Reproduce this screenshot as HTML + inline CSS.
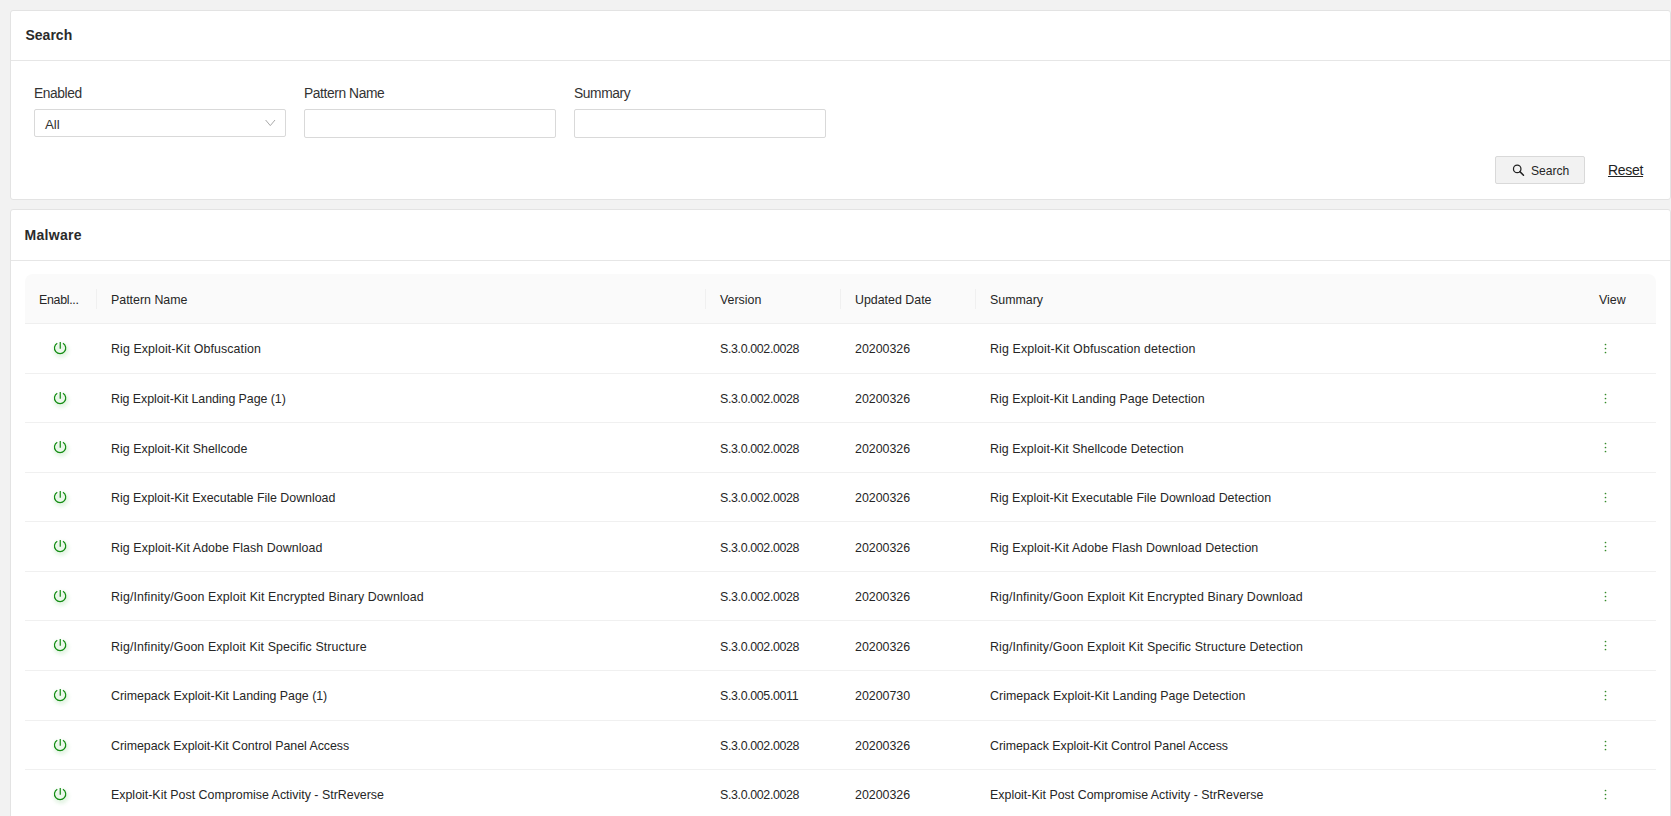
<!DOCTYPE html>
<html>
<head>
<meta charset="utf-8">
<style>
html,body{margin:0;padding:0;}
body{width:1671px;height:816px;overflow:hidden;background:#f2f2f2;font-family:"Liberation Sans",sans-serif;color:#333;position:relative;}
.abs{position:absolute;}
.card{position:absolute;left:10px;width:1659px;background:#fff;border:1px solid #e3e3e3;border-radius:3px;}
#c1{top:10px;height:188px;}
#c2{top:209px;height:620px;}
.ctitle{position:absolute;font-weight:bold;font-size:14px;letter-spacing:0;line-height:16px;color:#2a2a2a;white-space:nowrap;}
.hdiv{position:absolute;left:0;right:0;height:1px;background:#e6e6e6;}
.lbl{position:absolute;font-size:13.8px;line-height:15px;letter-spacing:-0.4px;color:#333;white-space:nowrap;}
.inp{position:absolute;background:#fff;border:1px solid #d9d9d9;border-radius:2px;box-sizing:border-box;}
.btn{position:absolute;background:#f2f2f2;border:1px solid #d9d9d9;border-radius:2px;box-sizing:border-box;}
.t{position:absolute;white-space:nowrap;font-size:12.4px;line-height:14px;color:#262626;}
.v{letter-spacing:-0.35px;}
.th{position:absolute;left:25px;width:1631px;top:274px;height:49px;background:#fafafa;border-radius:8px 8px 0 0;border-bottom:1px solid #efefef;}
.sep{position:absolute;top:289px;width:1px;height:20px;background:#f0f0f0;}
.row{position:absolute;left:25px;width:1631px;border-bottom:1px solid #f0f0f0;box-sizing:border-box;}
</style>
</head>
<body>
<!-- Search card -->
<div class="card" id="c1"></div>
<div class="ctitle" style="left:25.5px;top:27px;">Search</div>
<div class="hdiv" style="left:11px;width:1659px;top:60px;"></div>

<div class="lbl" style="left:34px;top:86px;">Enabled</div>
<div class="lbl" style="left:304px;top:86px;">Pattern Name</div>
<div class="lbl" style="left:574px;top:86px;">Summary</div>

<div class="inp" style="left:34px;top:109px;width:252px;height:28px;"></div>
<div class="lbl" style="left:45px;top:117px;font-size:13.3px;letter-spacing:0;">All</div>
<svg class="abs" style="left:264px;top:118px;" width="12" height="9" viewBox="0 0 12 9"><path d="M1.6 2 L6.3 7.6 L11 2" fill="none" stroke="#a9a9a9" stroke-width="1"/></svg>
<div class="inp" style="left:304px;top:109px;width:252px;height:29px;"></div>
<div class="inp" style="left:574px;top:109px;width:252px;height:29px;"></div>

<div class="btn" style="left:1495px;top:156px;width:90px;height:28px;"></div>
<svg class="abs" style="left:1511px;top:163px;" width="14" height="14" viewBox="0 0 14 14"><circle cx="6.2" cy="5.9" r="3.75" fill="none" stroke="#222" stroke-width="1.25"/><path d="M8.9 8.6 L12.5 12.2" stroke="#222" stroke-width="1.5" stroke-linecap="round"/></svg>
<div class="t" style="left:1531px;top:164px;font-size:12.1px;">Search</div>
<div class="lbl" style="left:1608px;top:163px;font-size:14px;letter-spacing:-0.3px;text-decoration:underline;text-underline-offset:1px;color:#222;">Reset</div>

<!-- Malware card -->
<div class="card" id="c2"></div>
<div class="ctitle" style="left:24.5px;top:227px;letter-spacing:0.3px;">Malware</div>
<div class="hdiv" style="left:11px;width:1659px;top:260px;"></div>

<div class="th"></div>
<div class="sep" style="left:96px;"></div>
<div class="sep" style="left:705px;"></div>
<div class="sep" style="left:840px;"></div>
<div class="sep" style="left:975px;"></div>
<div class="t" style="left:39px;top:293px;letter-spacing:-0.3px;">Enabl...</div>
<div class="t" style="left:111px;top:293px;">Pattern Name</div>
<div class="t" style="left:720px;top:293px;">Version</div>
<div class="t" style="left:855px;top:293px;">Updated Date</div>
<div class="t" style="left:990px;top:293px;">Summary</div>
<div class="t" style="left:1599px;top:293px;">View</div>

<div id="rows">
<div class="row" style="top:324px;height:50px;"></div>
<div class="t" style="left:111px;top:342.45px;letter-spacing:0.096px">Rig Exploit-Kit Obfuscation</div>
<div class="t v" style="left:720px;top:342.45px;">S.3.0.002.0028</div>
<div class="t d" style="left:855px;top:342.45px;">20200326</div>
<div class="t" style="left:990px;top:342.45px;letter-spacing:0.117px">Rig Exploit-Kit Obfuscation detection</div>
<svg class="abs" style="left:50px;top:338px;overflow:visible;filter:drop-shadow(1px 2px 2px rgba(40,170,40,0.45))" width="20" height="20" viewBox="0 0 20 20"><path d="M7.27 5.15 A5.65 5.65 0 1 0 12.93 5.15" fill="none" stroke="#128c12" stroke-width="1.2"/><path d="M10.25 4.1 V10.7" stroke="#128c12" stroke-width="1.2"/></svg>
<svg class="abs" style="left:1603px;top:342px;" width="5" height="13" viewBox="0 0 5 13"><circle cx="2.5" cy="2.5" r="0.85" fill="#358a2a"/><circle cx="2.5" cy="6.5" r="0.85" fill="#358a2a"/><circle cx="2.5" cy="10.5" r="0.85" fill="#358a2a"/></svg>
<div class="row" style="top:374px;height:49px;"></div>
<div class="t" style="left:111px;top:392.0px;letter-spacing:-0.049px">Rig Exploit-Kit Landing Page (1)</div>
<div class="t v" style="left:720px;top:392.0px;">S.3.0.002.0028</div>
<div class="t d" style="left:855px;top:392.0px;">20200326</div>
<div class="t" style="left:990px;top:392.0px;letter-spacing:0.027px">Rig Exploit-Kit Landing Page Detection</div>
<svg class="abs" style="left:50px;top:388px;overflow:visible;filter:drop-shadow(1px 2px 2px rgba(40,170,40,0.45))" width="20" height="20" viewBox="0 0 20 20"><path d="M7.27 5.15 A5.65 5.65 0 1 0 12.93 5.15" fill="none" stroke="#128c12" stroke-width="1.2"/><path d="M10.25 4.1 V10.7" stroke="#128c12" stroke-width="1.2"/></svg>
<svg class="abs" style="left:1603px;top:392px;" width="5" height="13" viewBox="0 0 5 13"><circle cx="2.5" cy="2.5" r="0.85" fill="#358a2a"/><circle cx="2.5" cy="6.5" r="0.85" fill="#358a2a"/><circle cx="2.5" cy="10.5" r="0.85" fill="#358a2a"/></svg>
<div class="row" style="top:423px;height:50px;"></div>
<div class="t" style="left:111px;top:441.55px;letter-spacing:0.029px">Rig Exploit-Kit Shellcode</div>
<div class="t v" style="left:720px;top:441.55px;">S.3.0.002.0028</div>
<div class="t d" style="left:855px;top:441.55px;">20200326</div>
<div class="t" style="left:990px;top:441.55px;letter-spacing:0.061px">Rig Exploit-Kit Shellcode Detection</div>
<svg class="abs" style="left:50px;top:437px;overflow:visible;filter:drop-shadow(1px 2px 2px rgba(40,170,40,0.45))" width="20" height="20" viewBox="0 0 20 20"><path d="M7.27 5.15 A5.65 5.65 0 1 0 12.93 5.15" fill="none" stroke="#128c12" stroke-width="1.2"/><path d="M10.25 4.1 V10.7" stroke="#128c12" stroke-width="1.2"/></svg>
<svg class="abs" style="left:1603px;top:441px;" width="5" height="13" viewBox="0 0 5 13"><circle cx="2.5" cy="2.5" r="0.85" fill="#358a2a"/><circle cx="2.5" cy="6.5" r="0.85" fill="#358a2a"/><circle cx="2.5" cy="10.5" r="0.85" fill="#358a2a"/></svg>
<div class="row" style="top:473px;height:49px;"></div>
<div class="t" style="left:111px;top:491.1px;letter-spacing:-0.003px">Rig Exploit-Kit Executable File Download</div>
<div class="t v" style="left:720px;top:491.1px;">S.3.0.002.0028</div>
<div class="t d" style="left:855px;top:491.1px;">20200326</div>
<div class="t" style="left:990px;top:491.1px;letter-spacing:0.017px">Rig Exploit-Kit Executable File Download Detection</div>
<svg class="abs" style="left:50px;top:487px;overflow:visible;filter:drop-shadow(1px 2px 2px rgba(40,170,40,0.45))" width="20" height="20" viewBox="0 0 20 20"><path d="M7.27 5.15 A5.65 5.65 0 1 0 12.93 5.15" fill="none" stroke="#128c12" stroke-width="1.2"/><path d="M10.25 4.1 V10.7" stroke="#128c12" stroke-width="1.2"/></svg>
<svg class="abs" style="left:1603px;top:491px;" width="5" height="13" viewBox="0 0 5 13"><circle cx="2.5" cy="2.5" r="0.85" fill="#358a2a"/><circle cx="2.5" cy="6.5" r="0.85" fill="#358a2a"/><circle cx="2.5" cy="10.5" r="0.85" fill="#358a2a"/></svg>
<div class="row" style="top:522px;height:50px;"></div>
<div class="t" style="left:111px;top:540.65px;letter-spacing:0.077px">Rig Exploit-Kit Adobe Flash Download</div>
<div class="t v" style="left:720px;top:540.65px;">S.3.0.002.0028</div>
<div class="t d" style="left:855px;top:540.65px;">20200326</div>
<div class="t" style="left:990px;top:540.65px;letter-spacing:0.084px">Rig Exploit-Kit Adobe Flash Download Detection</div>
<svg class="abs" style="left:50px;top:536px;overflow:visible;filter:drop-shadow(1px 2px 2px rgba(40,170,40,0.45))" width="20" height="20" viewBox="0 0 20 20"><path d="M7.27 5.15 A5.65 5.65 0 1 0 12.93 5.15" fill="none" stroke="#128c12" stroke-width="1.2"/><path d="M10.25 4.1 V10.7" stroke="#128c12" stroke-width="1.2"/></svg>
<svg class="abs" style="left:1603px;top:540px;" width="5" height="13" viewBox="0 0 5 13"><circle cx="2.5" cy="2.5" r="0.85" fill="#358a2a"/><circle cx="2.5" cy="6.5" r="0.85" fill="#358a2a"/><circle cx="2.5" cy="10.5" r="0.85" fill="#358a2a"/></svg>
<div class="row" style="top:572px;height:49px;"></div>
<div class="t" style="left:111px;top:590.2px;letter-spacing:0.115px">Rig/Infinity/Goon Exploit Kit Encrypted Binary Download</div>
<div class="t v" style="left:720px;top:590.2px;">S.3.0.002.0028</div>
<div class="t d" style="left:855px;top:590.2px;">20200326</div>
<div class="t" style="left:990px;top:590.2px;letter-spacing:0.116px">Rig/Infinity/Goon Exploit Kit Encrypted Binary Download</div>
<svg class="abs" style="left:50px;top:586px;overflow:visible;filter:drop-shadow(1px 2px 2px rgba(40,170,40,0.45))" width="20" height="20" viewBox="0 0 20 20"><path d="M7.27 5.15 A5.65 5.65 0 1 0 12.93 5.15" fill="none" stroke="#128c12" stroke-width="1.2"/><path d="M10.25 4.1 V10.7" stroke="#128c12" stroke-width="1.2"/></svg>
<svg class="abs" style="left:1603px;top:590px;" width="5" height="13" viewBox="0 0 5 13"><circle cx="2.5" cy="2.5" r="0.85" fill="#358a2a"/><circle cx="2.5" cy="6.5" r="0.85" fill="#358a2a"/><circle cx="2.5" cy="10.5" r="0.85" fill="#358a2a"/></svg>
<div class="row" style="top:621px;height:50px;"></div>
<div class="t" style="left:111px;top:639.75px;letter-spacing:0.104px">Rig/Infinity/Goon Exploit Kit Specific Structure</div>
<div class="t v" style="left:720px;top:639.75px;">S.3.0.002.0028</div>
<div class="t d" style="left:855px;top:639.75px;">20200326</div>
<div class="t" style="left:990px;top:639.75px;letter-spacing:0.111px">Rig/Infinity/Goon Exploit Kit Specific Structure Detection</div>
<svg class="abs" style="left:50px;top:635px;overflow:visible;filter:drop-shadow(1px 2px 2px rgba(40,170,40,0.45))" width="20" height="20" viewBox="0 0 20 20"><path d="M7.27 5.15 A5.65 5.65 0 1 0 12.93 5.15" fill="none" stroke="#128c12" stroke-width="1.2"/><path d="M10.25 4.1 V10.7" stroke="#128c12" stroke-width="1.2"/></svg>
<svg class="abs" style="left:1603px;top:639px;" width="5" height="13" viewBox="0 0 5 13"><circle cx="2.5" cy="2.5" r="0.85" fill="#358a2a"/><circle cx="2.5" cy="6.5" r="0.85" fill="#358a2a"/><circle cx="2.5" cy="10.5" r="0.85" fill="#358a2a"/></svg>
<div class="row" style="top:671px;height:50px;"></div>
<div class="t" style="left:111px;top:689.3px;letter-spacing:-0.019px">Crimepack Exploit-Kit Landing Page (1)</div>
<div class="t v" style="left:720px;top:689.3px;">S.3.0.005.0011</div>
<div class="t d" style="left:855px;top:689.3px;">20200730</div>
<div class="t" style="left:990px;top:689.3px;letter-spacing:0.03px">Crimepack Exploit-Kit Landing Page Detection</div>
<svg class="abs" style="left:50px;top:685px;overflow:visible;filter:drop-shadow(1px 2px 2px rgba(40,170,40,0.45))" width="20" height="20" viewBox="0 0 20 20"><path d="M7.27 5.15 A5.65 5.65 0 1 0 12.93 5.15" fill="none" stroke="#128c12" stroke-width="1.2"/><path d="M10.25 4.1 V10.7" stroke="#128c12" stroke-width="1.2"/></svg>
<svg class="abs" style="left:1603px;top:689px;" width="5" height="13" viewBox="0 0 5 13"><circle cx="2.5" cy="2.5" r="0.85" fill="#358a2a"/><circle cx="2.5" cy="6.5" r="0.85" fill="#358a2a"/><circle cx="2.5" cy="10.5" r="0.85" fill="#358a2a"/></svg>
<div class="row" style="top:721px;height:49px;"></div>
<div class="t" style="left:111px;top:738.85px;letter-spacing:-0.035px">Crimepack Exploit-Kit Control Panel Access</div>
<div class="t v" style="left:720px;top:738.85px;">S.3.0.002.0028</div>
<div class="t d" style="left:855px;top:738.85px;">20200326</div>
<div class="t" style="left:990px;top:738.85px;letter-spacing:-0.04px">Crimepack Exploit-Kit Control Panel Access</div>
<svg class="abs" style="left:50px;top:735px;overflow:visible;filter:drop-shadow(1px 2px 2px rgba(40,170,40,0.45))" width="20" height="20" viewBox="0 0 20 20"><path d="M7.27 5.15 A5.65 5.65 0 1 0 12.93 5.15" fill="none" stroke="#128c12" stroke-width="1.2"/><path d="M10.25 4.1 V10.7" stroke="#128c12" stroke-width="1.2"/></svg>
<svg class="abs" style="left:1603px;top:739px;" width="5" height="13" viewBox="0 0 5 13"><circle cx="2.5" cy="2.5" r="0.85" fill="#358a2a"/><circle cx="2.5" cy="6.5" r="0.85" fill="#358a2a"/><circle cx="2.5" cy="10.5" r="0.85" fill="#358a2a"/></svg>
<div class="row" style="top:770px;height:50px;"></div>
<div class="t" style="left:111px;top:788.4px;letter-spacing:0.006px">Exploit-Kit Post Compromise Activity - StrReverse</div>
<div class="t v" style="left:720px;top:788.4px;">S.3.0.002.0028</div>
<div class="t d" style="left:855px;top:788.4px;">20200326</div>
<div class="t" style="left:990px;top:788.4px;letter-spacing:0.014px">Exploit-Kit Post Compromise Activity - StrReverse</div>
<svg class="abs" style="left:50px;top:784px;overflow:visible;filter:drop-shadow(1px 2px 2px rgba(40,170,40,0.45))" width="20" height="20" viewBox="0 0 20 20"><path d="M7.27 5.15 A5.65 5.65 0 1 0 12.93 5.15" fill="none" stroke="#128c12" stroke-width="1.2"/><path d="M10.25 4.1 V10.7" stroke="#128c12" stroke-width="1.2"/></svg>
<svg class="abs" style="left:1603px;top:788px;" width="5" height="13" viewBox="0 0 5 13"><circle cx="2.5" cy="2.5" r="0.85" fill="#358a2a"/><circle cx="2.5" cy="6.5" r="0.85" fill="#358a2a"/><circle cx="2.5" cy="10.5" r="0.85" fill="#358a2a"/></svg>
</div>
</body>
</html>
